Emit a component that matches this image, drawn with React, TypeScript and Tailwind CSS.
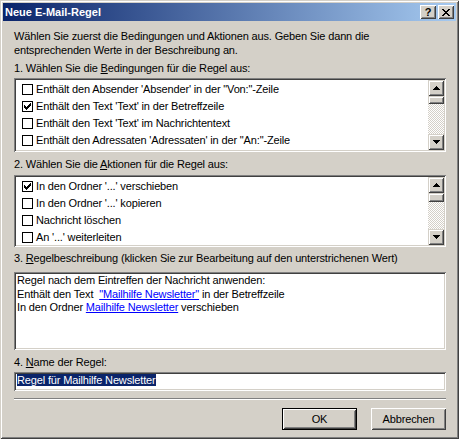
import React from "react";

const SUNKEN =
  "shadow-[inset_1px_1px_0_#808080,inset_-1px_-1px_0_#ffffff,inset_2px_2px_0_#404040,inset_-2px_-2px_0_#d4d0c8]";
const FRAME =
  "shadow-[inset_1px_1px_0_#d4d0c8,inset_-1px_-1px_0_#404040,inset_2px_2px_0_#ffffff,inset_-2px_-2px_0_#808080]";
const BUTTON =
  "shadow-[inset_1px_1px_0_#ffffff,inset_-1px_-1px_0_#404040,inset_2px_2px_0_#d4d0c8,inset_-2px_-2px_0_#808080]";

function Arrow({ dir }: { dir: "up" | "down" }) {
  const d =
    dir === "up"
      ? "M3 0h1v1h-1z M2 1h3v1h-3z M1 2h5v1h-5z M0 3h7v1h-7z"
      : "M0 0h7v1h-7z M1 1h5v1h-5z M2 2h3v1h-3z M3 3h1v1h-1z";
  return (
    <div className={`flex h-[16px] w-[16px] items-center justify-center bg-[#d4d0c8] ${FRAME}`}>
      <svg width="7" height="4" viewBox="0 0 7 4" shapeRendering="crispEdges">
        <path d={d} fill="#000" />
      </svg>
    </div>
  );
}

function ScrollBar({ thumb }: { thumb: "a" | "b" }) {
  return (
    <div className="flex w-[16px] flex-col">
      <Arrow dir="up" />
      <div className={`${thumb === "a" ? "h-[8px]" : "h-[9px]"} bg-[#d4d0c8] ${FRAME}`} />
      <div className="flex-1 bg-[repeating-conic-gradient(#ffffff_0%_25%,#d4d0c8_0%_50%)] bg-[length:2px_2px]" />
      <Arrow dir="down" />
    </div>
  );
}

function Check({ checked }: { checked?: boolean }) {
  return (
    <div className="flex h-[11px] w-[11px] shrink-0 items-center justify-center border border-black bg-white">
      {checked && (
        <svg width="7" height="7" viewBox="0 0 7 7" shapeRendering="crispEdges">
          <path
            d="M0 2h1v3h-1z M1 3h1v3h-1z M2 4h1v3h-1z M3 3h1v3h-1z M4 2h1v3h-1z M5 1h1v3h-1z M6 0h1v3h-1z"
            fill="#000"
          />
        </svg>
      )}
    </div>
  );
}

function ListBox({
  rows,
  height,
  thumb,
}: {
  rows: { t: string; c?: boolean }[];
  height: string;
  thumb: "a" | "b";
}) {
  return (
    <div className={`flex ${height} bg-white p-[2px] ${SUNKEN}`}>
      <div className="flex flex-1 flex-col overflow-hidden pt-[1px]">
        {rows.map((r, i) => (
          <div key={i} className="flex h-[17px] shrink-0 items-center gap-[3px] pl-[6px] whitespace-nowrap">
            <Check checked={r.c} />
            <span>{r.t}</span>
          </div>
        ))}
      </div>
      <ScrollBar thumb={thumb} />
    </div>
  );
}

export default function App() {
  return (
    <div
      className={`flex h-[439px] w-[459px] flex-col bg-[#d4d0c8] p-[3px] font-['Liberation_Sans',Arial,sans-serif] text-[11px] leading-[13px] text-black ${FRAME}`}
    >
      {/* title bar */}
      <div className="flex h-[18px] shrink-0 items-start bg-[linear-gradient(to_right,#0a246a,#a6caf0)] pl-[2px] pr-[2px]">
        <div className="mt-[2px] flex-1 text-[11px] font-bold leading-[14px] text-white">Neue E-Mail-Regel</div>
        <div className="mt-[2px] flex gap-[2px]">
          <div className={`flex h-[14px] w-[16px] items-center justify-center bg-[#d4d0c8] ${BUTTON}`}>
            <span className="text-[11px] font-bold leading-[11px]">?</span>
          </div>
          <div className={`flex h-[14px] w-[16px] items-center justify-center bg-[#d4d0c8] ${BUTTON}`}>
            <svg width="8" height="7" viewBox="0 0 8 7" shapeRendering="crispEdges">
              <path
                d="M0 0h2v1h-2z M6 0h2v1h-2z M1 1h2v1h-2z M5 1h2v1h-2z M2 2h4v1h-4z M3 3h2v1h-2z M2 4h4v1h-4z M1 5h2v1h-2z M5 5h2v1h-2z M0 6h2v1h-2z M6 6h2v1h-2z"
                fill="#000"
              />
            </svg>
          </div>
        </div>
      </div>

      {/* content */}
      <div className="flex flex-1 flex-col pl-[11px] pr-[10px] tracking-[-0.15px]">
        <p className="mt-[8px] leading-[14px]">
          Wählen Sie zuerst die Bedingungen und Aktionen aus. Geben Sie dann die
          <br />
          entsprechenden Werte in der Beschreibung an.
        </p>

        <div className="mt-[5px]">
          1. Wählen Sie die <u>B</u>edingungen für die Regel aus:
        </div>
        <div className="mt-[3px]">
          <ListBox
            height="h-[74px]"
            thumb="a"
            rows={[
              { t: "Enthält den Absender 'Absender' in der \"Von:\"-Zeile" },
              { t: "Enthält den Text 'Text' in der Betreffzeile", c: true },
              { t: "Enthält den Text 'Text' im Nachrichtentext" },
              { t: "Enthält den Adressaten 'Adressaten' in der \"An:\"-Zeile" },
            ]}
          />
        </div>

        <div className="mt-[6px]">
          2. Wählen Sie die <u>A</u>ktionen für die Regel aus:
        </div>
        <div className="mt-[4px]">
          <ListBox
            height="h-[72px]"
            thumb="b"
            rows={[
              { t: "In den Ordner '...' verschieben", c: true },
              { t: "In den Ordner '...' kopieren" },
              { t: "Nachricht löschen" },
              { t: "An '...' weiterleiten" },
            ]}
          />
        </div>

        <div className="mt-[5px]">
          3. <u>R</u>egelbeschreibung (klicken Sie zur Bearbeitung auf den unterstrichenen Wert)
        </div>
        <div className={`mt-[7px] h-[78px] bg-white pl-[3px] pt-[2px] leading-[13.5px] ${SUNKEN}`}>
          <div>Regel nach dem Eintreffen der Nachricht anwenden:</div>
          <div>
            Enthält den Text <span className="ml-[3px] text-[#0000ff] underline">"Mailhilfe Newsletter"</span> in der
            Betreffzeile
          </div>
          <div>
            In den Ordner <span className="text-[#0000ff] underline">Mailhilfe Newsletter</span> verschieben
          </div>
        </div>

        <div className="mt-[6px]">
          4. <u>N</u>ame der Regel:
        </div>
        <div className={`mt-[3px] h-[19px] bg-white pl-[3px] pt-[2px] ${SUNKEN}`}>
          <span className="bg-[#0a246a] text-white">Regel für Mailhilfe Newsletter</span>
        </div>

        <div className="mt-[7px] h-px bg-[#808080]" />
        <div className="h-px bg-white" />

        <div className="mt-[8px] flex justify-end gap-[14px]">
          <div className="h-[22px] w-[75px] border border-black">
            <div className={`flex h-full w-full items-center justify-center bg-[#d4d0c8] ${BUTTON}`}>OK</div>
          </div>
          <div className={`flex h-[22px] w-[75px] items-center justify-center bg-[#d4d0c8] ${BUTTON}`}>
            Abbrechen
          </div>
        </div>
      </div>
    </div>
  );
}
